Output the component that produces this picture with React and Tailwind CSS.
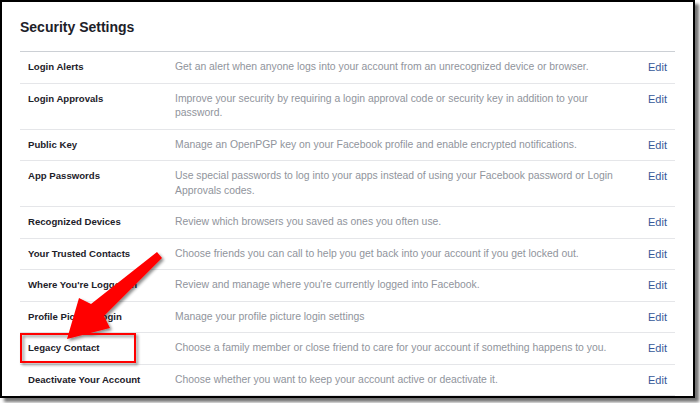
import React from "react";

const ROWS = [
  ["Login Alerts", "Get an alert when anyone logs into your account from an unrecognized device or browser."],
  ["Login Approvals", "Improve your security by requiring a login approval code or security key in addition to your password."],
  ["Public Key", "Manage an OpenPGP key on your Facebook profile and enable encrypted notifications."],
  ["App Passwords", "Use special passwords to log into your apps instead of using your Facebook password or Login Approvals codes."],
  ["Recognized Devices", "Review which browsers you saved as ones you often use."],
  ["Your Trusted Contacts", "Choose friends you can call to help you get back into your account if you get locked out."],
  ["Where You're Logged In", "Review and manage where you're currently logged into Facebook."],
  ["Profile Picture Login", "Manage your profile picture login settings"],
  ["Legacy Contact", "Choose a family member or close friend to care for your account if something happens to you."],
  ["Deactivate Your Account", "Choose whether you want to keep your account active or deactivate it."],
];

const SettingRow = ({ label, desc }) => (
  <div className="flex items-start border-b border-[#e5e6e9] pl-2 pr-2 pt-2 pb-2 leading-[14.5px]">
    <div className="w-[147px] shrink-0 text-[9.6px] font-bold text-[#1d2129]">{label}</div>
    <div className="w-[455px] shrink-0 text-[10.4px] text-[#90949c]">{desc}</div>
    <div className="flex-1 text-right text-[11px] text-[#365899]">Edit</div>
  </div>
);

const Arrow = () => (
  <svg
    className="absolute left-0 top-0 pointer-events-none"
    width="700"
    height="403"
    viewBox="0 0 700 403"
  >
    <defs>
      <filter id="sh" x="-20%" y="-20%" width="140%" height="140%">
        <feDropShadow dx="2" dy="2" stdDeviation="1.5" floodColor="#000" floodOpacity="0.45" />
      </filter>
    </defs>
    <g filter="url(#sh)">
      <rect x="21" y="334" width="114" height="28" fill="none" stroke="#f00" strokeWidth="2" />
      <path d="M157 252 L162 258 L104 316 L110 328 L67 339 L79 298 L91 304 Z" fill="#f00" />
    </g>
  </svg>
);

export default function App() {
  return (
    <div className="relative w-[700px] h-[403px] bg-white" style={{ fontFamily: "'Liberation Sans', Arial, sans-serif" }}>
      <div className="w-[695px] h-[398px] border-2 border-black bg-white overflow-hidden shadow-[4px_4px_3px_rgba(0,0,0,0.55)] px-[18px]">
        <div className="h-[49px] pt-[16px]">
          <h1 className="text-[14px] leading-[18px] font-bold text-[#1d2129]">Security Settings</h1>
        </div>
        <div className="border-t border-[#ccd0d5]">
          {ROWS.map(([label, desc]) => (
            <SettingRow key={label} label={label} desc={desc} />
          ))}
        </div>
      </div>
      <Arrow />
    </div>
  );
}
